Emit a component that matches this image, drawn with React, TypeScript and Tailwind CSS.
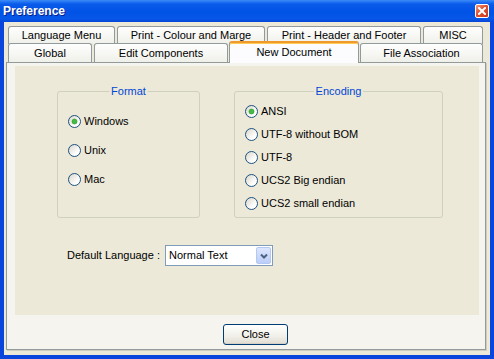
function Radio({ checked }: { checked?: boolean }) {
  return (
    <svg width="13" height="13" viewBox="0 0 13 13" className="shrink-0">
      <defs>
        <linearGradient id="radioFill" x1="0" y1="0" x2="1" y2="1">
          <stop offset="0" stopColor="#D8D4C6" />
          <stop offset="0.7" stopColor="#FFFFFF" />
        </linearGradient>
      </defs>
      <circle cx="6.5" cy="6.5" r="6" fill="url(#radioFill)" stroke="#1C5180" />
      {checked && <circle cx="6.5" cy="6.5" r="2.5" fill="#44B944" stroke="#1E9A1E" strokeWidth="0.6" />}
    </svg>
  );
}

function Option({ label, checked }: { label: string; checked?: boolean }) {
  return (
    <div className="flex items-center h-[13px] gap-[3px]">
      <Radio checked={checked} />
      <span className="leading-[13px]">{label}</span>
    </div>
  );
}

function GroupBox({ title, className, children }: { title: string; className: string; children: React.ReactNode }) {
  return (
    <div className={`relative border border-[#D0D0BF] rounded-[3px] ${className}`}>
      <span className="absolute left-1/2 -translate-x-1/2 -top-[7px] px-[2px] bg-[#ECE9D8] text-[#0046D5] leading-[13px] whitespace-nowrap">
        {title}
      </span>
      {children}
    </div>
  );
}

function Tab({ label, w, h, pt }: { label: string; w: string; h: string; pt: string }) {
  return (
    <div
      className={`${w} ${h} ${pt} shrink-0 border border-b-0 border-[#919B9C] rounded-t-[3px] bg-[linear-gradient(#FEFEFE,#F0F0EA)] flex items-start justify-center leading-[13px] whitespace-nowrap`}
    >
      {label}
    </div>
  );
}

function App() {
  return (
    <div className="w-[494px] h-[359px] flex flex-col bg-[#0A45DC] overflow-hidden font-['Liberation_Sans',Arial,sans-serif] text-[11px] text-black">
      {/* title bar */}
      <div className="h-[22px] shrink-0 flex items-center justify-between pl-[3px] pr-[5px] bg-[linear-gradient(#3C8CF8_0%,#0A5BEA_18%,#0052E6_55%,#0758E8_85%,#0546D8_100%)]">
        <span className="text-white font-bold text-[12px] leading-[14px] [text-shadow:1px_1px_0_#0A1E8A]">Preference</span>
        <div className="w-[14px] h-[14px] rounded-[2px] border border-white bg-[linear-gradient(135deg,#F09A80,#E0502F_45%,#C83A1C)] flex items-center justify-center">
          <svg width="8" height="8" viewBox="0 0 8 8">
            <path d="M1 1L7 7M7 1L1 7" stroke="white" strokeWidth="2" strokeLinecap="square" />
          </svg>
        </div>
      </div>

      {/* dialog body */}
      <div className="flex-1 mx-[4px] mb-[4px] bg-[#ECE9D8] pt-[4px] pl-[2px] flex flex-col">
        <div className="flex gap-[2px] ml-[2px] h-[17px]">
          <Tab label="Language Menu" w="w-[107px]" h="h-[18px]" pt="pt-[2px]" />
          <Tab label="Print - Colour and Marge" w="w-[148px]" h="h-[18px]" pt="pt-[2px]" />
          <Tab label="Print - Header and Footer" w="w-[154px]" h="h-[18px]" pt="pt-[2px]" />
          <Tab label="MISC" w="w-[60px]" h="h-[18px]" pt="pt-[2px]" />
        </div>
        <div className="flex gap-[2px] ml-[2px] h-[19px] relative z-10">
          <Tab label="Global" w="w-[84px]" h="h-[19px]" pt="pt-[3px]" />
          <Tab label="Edit Components" w="w-[134px]" h="h-[19px]" pt="pt-[3px]" />
          <div className="w-[130px] h-[22px] -mt-[2px] -mx-[1px] shrink-0 border border-b-0 border-[#919B9C] border-t-2 border-t-[#EE9A2E] rounded-t-[3px] bg-[#FCFCFE] shadow-[inset_0_1px_0_#FFCB52] flex items-start justify-center pt-[3px] leading-[13px]">
            New Document
          </div>
          <Tab label="File Association" w="w-[123px]" h="h-[19px]" pt="pt-[3px]" />
        </div>

        {/* tab page */}
        <div className="w-[480px] h-[288px] border border-[#919B9C] bg-[#F5F4EF] shadow-[1px_1px_0_#D0CEBF] flex flex-col">
          <div className="mt-[3px] ml-[8px] w-[464px] h-[249px] bg-[#ECE9D8] flex flex-col">
            <div className="flex items-start gap-[34px] mt-[25px] ml-[42px]">
              <GroupBox title="Format" className="w-[143px] h-[127px] pt-[23px] pl-[10px]">
                <div className="flex flex-col gap-[16px]">
                  <Option label="Windows" checked />
                  <Option label="Unix" />
                  <Option label="Mac" />
                </div>
              </GroupBox>
              <GroupBox title="Encoding" className="w-[209px] h-[127px] pt-[13px] pl-[10px]">
                <div className="flex flex-col gap-[10px]">
                  <Option label="ANSI" checked />
                  <Option label="UTF-8 without BOM" />
                  <Option label="UTF-8" />
                  <Option label="UCS2 Big endian" />
                  <Option label="UCS2 small endian" />
                </div>
              </GroupBox>
            </div>

            <div className="flex items-center mt-[27px] ml-[52px]">
              <span className="w-[98px] leading-[13px]">Default Language :</span>
              <div className="w-[108px] h-[21px] border border-[#7F9DB9] bg-white flex items-center">
                <span className="flex-1 pl-[3px] leading-[13px]">Normal Text</span>
                <div className="w-[15px] h-[17px] mr-[1px] rounded-[2px] border border-[#B4C8F4] bg-[linear-gradient(#DCE6FD,#BCCEF8)] flex items-center justify-center">
                  <svg width="8" height="6" viewBox="0 0 8 6">
                    <path d="M1 1.5L4 4.5L7 1.5" fill="none" stroke="#4D6185" strokeWidth="2" />
                  </svg>
                </div>
              </div>
            </div>
          </div>

          <div className="mt-[9px] ml-[216px]">
            <button className="w-[65px] h-[21px] rounded-[3px] border border-[#003C74] bg-[linear-gradient(#FFFFFF,#F0EFE8_60%,#DEDCD2)] shadow-[inset_0_-1px_0_#D6D0C5] leading-[13px] text-black">
              Close
            </button>
          </div>
        </div>
      </div>
    </div>
  );
}

export default App;
